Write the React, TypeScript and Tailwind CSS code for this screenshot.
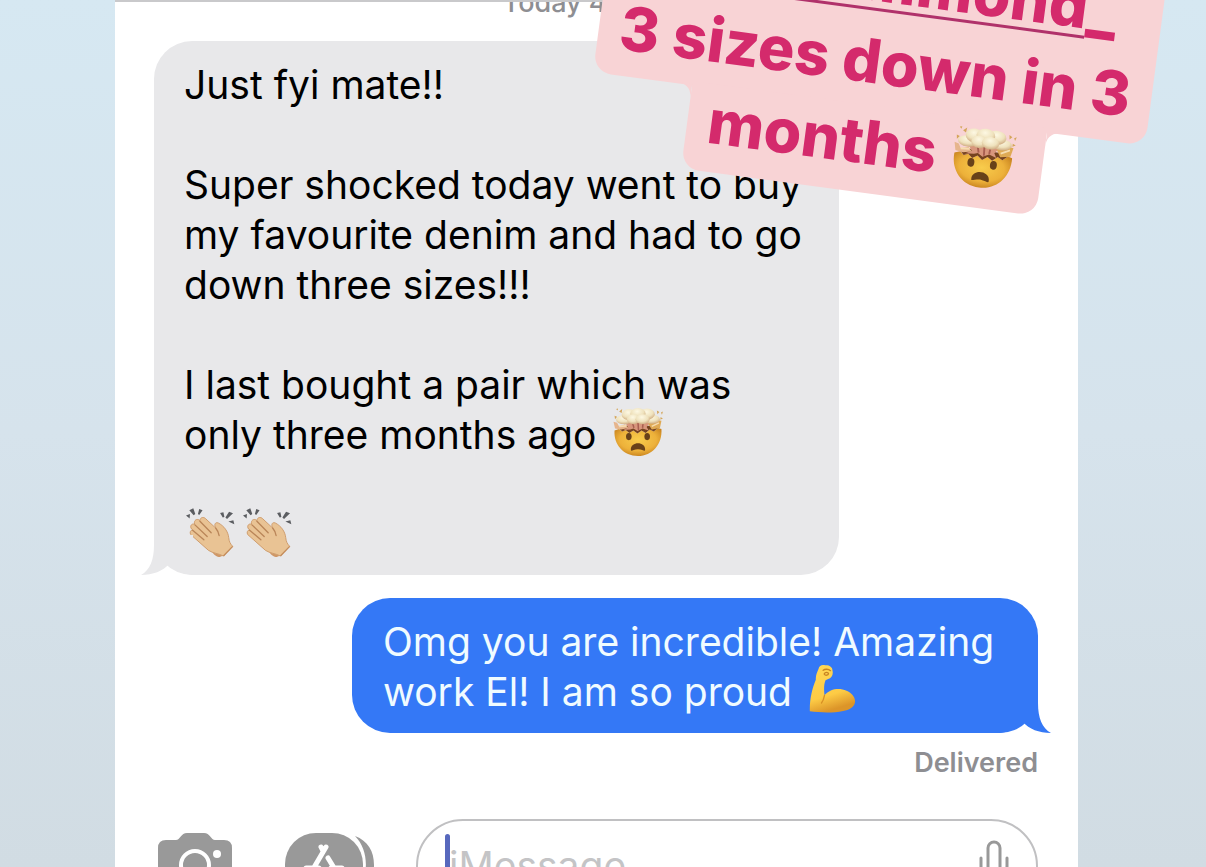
import type { ReactNode } from 'react';

function MindBlown({ className }: { className: string }) {
  return (
    <svg viewBox="0 0 100 100" className={className} role="img" aria-label="Exploding head">
      <defs>
        <radialGradient id="face" cx="50%" cy="42%" r="60%">
          <stop offset="0" stopColor="#f8cc4c" />
          <stop offset="0.65" stopColor="#edb13a" />
          <stop offset="1" stopColor="#c98420" />
        </radialGradient>
        <radialGradient id="puff" cx="45%" cy="30%" r="70%">
          <stop offset="0" stopColor="#fdf8e3" />
          <stop offset="0.6" stopColor="#efe2bd" />
          <stop offset="1" stopColor="#cfac82" />
        </radialGradient>
      </defs>
      <path d="M3 46 L12 43 L18 48 L25 45 L32 51 L40 46 L48 52 L56 46 L64 51 L72 44 L80 48 L88 41 L95 43 C97 73 77 96 49 96 C21 96 1 74 3 46Z" fill="url(#face)" />
      <path d="M12 42 L18 48 L25 45 L32 51 L40 46 L48 52 L56 46 L64 51 L72 44 L80 48 L88 41 L76 37 L24 37Z" fill="#76431f" />
      <path d="M22 28 L30 40 L20 45 L34 44 L40 42 L48 47 L58 42 L70 46 L66 39 L76 27Z" fill="#d8967c" />
      <path d="M38 30 L41 41 M49 30 L50 45 M59 30 L58 41" stroke="#a85e50" strokeWidth="3" />
      <path d="M1 29 L8 31 L12 38 L24 34 L30 41 L16 44 L4 42Z" fill="#e6b58c" />
      <path d="M69 33 L82 25 L95 27 L92 41 L76 44Z" fill="#dfaa55" />
      <path d="M12 38 L26 37 M76 38 L90 31" stroke="#f6dcb0" strokeWidth="3" />
      <g fill="url(#puff)">
        <ellipse cx="22" cy="25" rx="16" ry="9" />
        <ellipse cx="76" cy="24" rx="16" ry="9" />
        <ellipse cx="31" cy="15" rx="14" ry="11" />
        <ellipse cx="67" cy="14" rx="15" ry="11" />
        <ellipse cx="49" cy="13" rx="15" ry="11" />
        <ellipse cx="40" cy="24" rx="13" ry="10" />
        <ellipse cx="58" cy="24" rx="14" ry="10" />
      </g>
      <path d="M12 9 L18 4 L17 12Z M6 4 L10 3 L9 7Z M86 7 L91 10 L87 14Z M94 11 L98 9 L96 15Z M3 17 L8 19 L4 24Z M93 20 L98 22 L93 25Z" fill="#d4a65a" />
      <ellipse cx="31" cy="58" rx="5.5" ry="7" fill="#684119" />
      <ellipse cx="67" cy="58" rx="5.5" ry="7" fill="#684119" />
      <path d="M35 84 C34 67 64 67 63 84 C63 88 59 84 49 83 C39 84 35 88 35 84Z" fill="#684119" />
    </svg>
  );
}

function Clap() {
  return (
    <svg viewBox="0 0 148 152" className="h-[51px] w-[49px]" role="img" aria-label="Clapping hands">
      <path d="M76 130 C84 144 94 150 102 150 L116 144 L100 124Z" fill="#cf9766" />
      <path
        d="M14 82 C11 76 13 69 20 68 C10 62 14 47 26 51 C22 39 34 32 42 40 C43 29 54 28 60 35 L90 63 C84 52 88 44 97 47 C115 56 127 73 129 91 C130 104 134 110 141 118 L113 147 C98 139 82 139 68 130Z"
        fill="#e9c394"
        stroke="#cf9d6e"
        strokeWidth="3"
        strokeLinejoin="round"
      />
      <path d="M42 42 L76 77 M27 53 L64 88 M20 69 L54 98 M90 63 C96 70 99 77 100 85" stroke="#b98558" strokeWidth="4" strokeLinecap="round" fill="none" />
      <path d="M113 147 L141 118" stroke="#c58d5c" strokeWidth="4" />
      <path d="M0 25 L12 20 L11 34Z M10 9 L22 3 L28 20 L23 24Z M40 5 L50 9 L40 23 L36 20Z M103 17 L113 15 L116 29 L111 31Z M130 13 L142 18 L124 35 L119 31Z M128 43 L143 39 L146 51Z" fill="#5b5d61" />
    </svg>
  );
}

function Muscle() {
  return (
    <svg viewBox="0 0 140 150" className="mb-1.5 h-[50px] w-[47px]" role="img" aria-label="Flexed biceps">
      <defs>
        <linearGradient id="arm" x1="0" y1="0" x2="0.3" y2="1">
          <stop offset="0" stopColor="#ffd857" />
          <stop offset="0.7" stopColor="#fdcb45" />
          <stop offset="1" stopColor="#dc9529" />
        </linearGradient>
      </defs>
      <path d="M28 15 C30 5 38 1 48 4 C60 3 70 9 70 20 C73 32 67 42 57 45 L49 49 C44 62 44 76 46 94 C63 73 91 71 112 80 C128 86 141 103 137 117 C133 131 120 138 102 141 C70 148 32 146 2 142 C1 106 9 73 20 47 C19 35 24 25 28 15Z" fill="url(#arm)" />
      <path d="M46 94 C44 104 41 112 37 117" stroke="#d99025" strokeWidth="4" fill="none" strokeLinecap="round" />
      <path d="M42 19 C48 14 58 15 64 20 M45 30 C48 23 57 24 58 29 C57 34 49 36 45 30" stroke="#c88422" strokeWidth="4" fill="none" strokeLinecap="round" />
    </svg>
  );
}

function Tail({ className }: { className: string }) {
  return (
    <svg viewBox="0 0 52 40" className={className} aria-hidden="true">
      <path d="M13 0 V10 C13 25 9 35 0 40 C12 40 22 36 28 29 C34 35 42 39 52 40 V0Z" fill="currentColor" />
    </svg>
  );
}

function Fillet({ className }: { className: string }) {
  return (
    <svg viewBox="0 0 16 16" className={className} aria-hidden="true">
      <path d="M0 0 H16 V16 C16 5 11 0 0 0Z" fill="#f8d3d5" />
    </svg>
  );
}

function Line({ children }: { children?: ReactNode }) {
  return <p className="flex h-[50px] items-center whitespace-nowrap">{children}</p>;
}

function Sticker() {
  return (
    <aside className="absolute -top-[98px] left-[593px] flex w-[557px] origin-[0_170px] rotate-[7.6deg] flex-col items-center text-[61px] font-extrabold text-[#d42a6c]">
      <div className="flex h-[170px] w-full flex-col justify-end rounded-[18px] bg-[#f8d3d5] pb-[7px] text-center leading-[82px] whitespace-nowrap">
        <a href="#profile">
          <span className="underline decoration-[#b0316a] decoration-[3px] underline-offset-[7px]">@ellhammond</span>
          <span className="font-black">_</span>
        </a>
        <p>3 sizes down in 3</p>
      </div>
      <div className="relative -mt-1 flex h-[88px] w-[358px] items-center justify-center gap-4 rounded-b-[18px] bg-[#f8d3d5] pt-1 pr-1.5 pb-4 whitespace-nowrap">
        <Fillet className="absolute top-[3px] -left-4 size-4" />
        <Fillet className="absolute top-[3px] -right-4 size-4 -scale-x-100" />
        <span>months</span>
        <MindBlown className="size-[63px]" />
      </div>
    </aside>
  );
}

export default function App() {
  return (
    <div className="relative h-screen overflow-hidden bg-linear-to-b from-[#d6e8f2] via-[#d6e3ec] to-[#d1dce3] pr-[128px] pl-[115px] font-['Inter',sans-serif]">
      <main className="flex h-full flex-col bg-white pr-10 pl-[39px]">
        <header className="-mr-10 -ml-[39px] h-[41px] shrink-0 overflow-hidden border-t-2 border-[#c9c9cb]">
          <p className="-mt-[15px] text-center text-[27px] leading-8 font-medium text-[#8e8e92]">Today 4:12 pm</p>
        </header>

        <section className="relative w-[685px] shrink-0 rounded-[38px] bg-[#e8e8ea] pt-[19px] pb-[15px] pl-[30px] text-[39px] text-black">
          <Tail className="absolute bottom-0 -left-[13px] h-10 w-[52px] text-[#e8e8ea]" />
          <Line>Just fyi mate!!</Line>
          <Line />
          <Line>Super shocked today went to buy</Line>
          <Line>my favourite denim and had to go</Line>
          <Line>down three sizes!!!</Line>
          <Line />
          <Line>I last bought a pair which was</Line>
          <Line>
            <span className="mr-[17px]">only three months ago</span>
            <MindBlown className="mb-1.5 size-[51px]" />
          </Line>
          <Line />
          <div className="flex h-[50px] items-center gap-2 pb-1.5 pl-0.5">
            <Clap />
            <Clap />
          </div>
        </section>

        <section className="relative mt-[23px] w-[686px] shrink-0 self-end rounded-[38px] bg-[#3478f6] pt-[19px] pb-4 pl-[31px] text-[39px] text-[#f0fbff]">
          <Tail className="absolute -right-[13px] bottom-0 h-10 w-[52px] -scale-x-100 text-[#3478f6]" />
          <Line>Omg you are incredible! Amazing</Line>
          <Line>
            <span className="mr-[17px]">work El! I am so proud</span>
            <Muscle />
          </Line>
        </section>
        <p className="mt-3 shrink-0 self-end text-[27px] leading-9 font-semibold text-[#8e8e92]">Delivered</p>

        <footer className="mt-[38px] flex shrink-0 items-start">
          <button type="button" aria-label="Camera" className="mt-[14px] ml-1 shrink-0">
            <svg viewBox="0 0 74 60" className="h-[60px] w-[74px]">
              <path d="M8 7 H18 C22 7 23 0 29 0 H46 C52 0 53 7 57 7 H66 Q74 7 74 15 V52 Q74 60 66 60 H8 Q0 60 0 52 V15 Q0 7 8 7Z" fill="#999" />
              <circle cx="37" cy="32" r="14" fill="none" stroke="#fff" strokeWidth="4" />
              <circle cx="59" cy="21" r="4" fill="#fff" />
            </svg>
          </button>
          <button type="button" aria-label="Apps" className="mt-[14px] ml-[53px] shrink-0">
            <svg viewBox="0 0 89 64" className="h-16 w-[89px]">
              <path d="M70 3 C83 8 89 18 89 32 C89 46 83 56 70 61 C84 46 85 18 70 3Z" fill="#999" />
              <rect width="78" height="64" rx="31" fill="#999" />
              <g stroke="#fff" strokeWidth="5" strokeLinecap="round">
                <path d="M41 14 L24 43 M36 14 L38 18 M43 25 L54 43 M21 35 H34 M46 35 H57" />
              </g>
            </svg>
          </button>
          <div className="relative ml-[42px] flex h-[94px] min-w-0 flex-1 items-center rounded-[47px] border-2 border-[#c0c0c2] pr-[27px] pl-[31px]">
            <span className="absolute top-[13px] left-[27px] h-16 w-[5px] rounded-full bg-[#5768bd]" />
            <input
              aria-label="iMessage"
              placeholder="iMessage"
              className="h-12 w-full min-w-0 flex-1 bg-transparent text-[39px] outline-none placeholder:text-[#c4c4c6]"
            />
            <button type="button" aria-label="Dictate" className="shrink-0">
              <svg viewBox="0 0 30 52" className="h-[52px] w-[30px]" fill="none" stroke="#999" strokeWidth="3" strokeLinecap="round">
                <rect x="9" y="2" width="12" height="31" rx="6" />
                <path d="M2 18 V26 C2 44 28 44 28 26 V18 M15 40 V49 M8 49 H22" />
              </svg>
            </button>
          </div>
        </footer>
      </main>
      <Sticker />
    </div>
  );
}
